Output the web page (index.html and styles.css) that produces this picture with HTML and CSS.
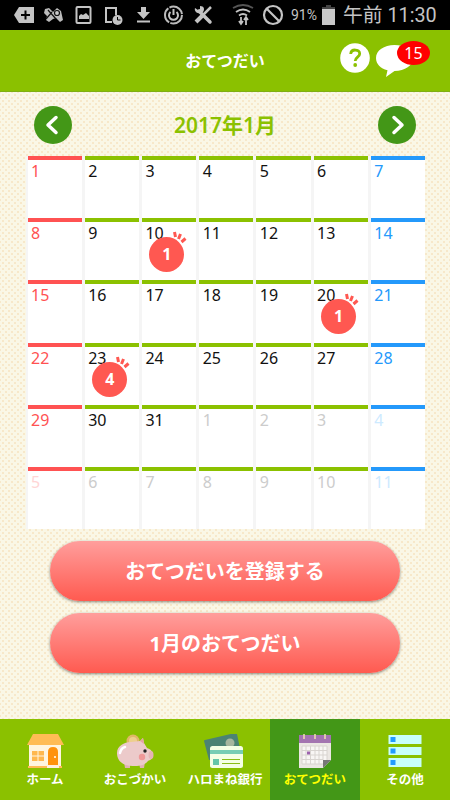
FILE: index.html
```
<!DOCTYPE html>
<html lang="ja">
<head>
    <meta charset="utf-8">
    <title>おてつだい</title>
    <link rel="stylesheet" href="styles.css">
</head>
<body>
    <div class="status">
        <svg class="status-icons" width="225" height="30" viewBox="0 0 225 30">
            <path d="M14 15l5-8h15v16H19z" fill="#c4c4c4"/>
            <path d="M21 15h9M25.500 10.500v9" stroke="#000" stroke-width="2"/>
            <path d="M45 9l4-1 4 4 4-4 4 3 2 9-3 2-4-4-3 1-4 3-3-2 1-4-3-3z" fill="#bbb"/>
            <path d="M48 10l8 9M46 19l6-7" stroke="#111" stroke-width="1.200"/>
            <circle cx="57" cy="13" r="2.500" fill="#ccc" stroke="#111" stroke-width="1.200"/>
            <rect x="76.500" y="7" width="14" height="16" rx="1" fill="none" stroke="#c4c4c4" stroke-width="2"/>
            <path d="M79 19v-3l2-2 2 1 3-2 3 3v3z" fill="#c4c4c4"/>
            <path d="M112 22h-6V8h10v7" fill="none" stroke="#c4c4c4" stroke-width="2"/>
            <circle cx="117.500" cy="20" r="5" fill="#c4c4c4"/>
            <path d="M117.500 17v3h3" stroke="#000" fill="none"/>
            <path d="M141 7h5v5h4l-6.500 7-6.500-7h4zM137 20.500h13v2h-13z" fill="#c4c4c4"/>
            <circle cx="173.500" cy="15" r="8.500" fill="none" stroke="#bbb" stroke-width="2" stroke-dasharray="16.500 1.300"/>
            <path d="M170.500 12a4.500 4.500 0 1 0 6 0M173.500 9v6" fill="none" stroke="#c4c4c4" stroke-width="2"/>
            <path d="M199 11l11 11" stroke="#c4c4c4" stroke-width="3.500" stroke-linecap="round"/>
            <path d="M195 8l3 2 2-1V6c4 0 5 3 3 6l-3 1c-3 1-6-2-5-5z" fill="#c4c4c4"/>
            <path d="M196 22l6-6" stroke="#c4c4c4" stroke-width="4"/>
            <path d="M202 16l9-9" stroke="#c4c4c4" stroke-width="2.500"/>
        </svg>
        <svg class="signal-icons" width="63" height="30" viewBox="0 0 63 30">
            <g fill="none" stroke="#c4c4c4" stroke-width="1.800">
                <path d="M8 8q10-6 20 0" stroke="#555"/>
                <path d="M11 12q7-5 14 0M14 15.500q4-3 8 0"/>
                <path d="M16 17v7M14 21l2 3 2-3M21 25v-7M19 20l2-3 2 3"/>
                <circle cx="48" cy="15" r="9" stroke-width="2.200"/>
                <path d="M42 9l12 12" stroke-width="2.200"/>
            </g>
        </svg>
        <span class="percent">91%</span>
        <svg class="battery" width="13" height="20" viewBox="0 0 13 20">
            <path d="M4 0h5v2h4v3H0V2h4z" fill="#444"/>
            <path d="M0 4h13v16H0z" fill="#c8c8c8"/>
        </svg>
        <span class="clock">午前 11:30</span>
    </div>

    <header class="header">
        <h1>おてつだい</h1>
        <div class="header-actions">
            <svg width="30" height="30" viewBox="0 0 30 30">
                <circle cx="15" cy="15" r="14.800" fill="#fff"/>
                <path d="M10.700 11c.3-5.500 9-5 9-.3 0 3.600-4.500 3.300-4.500 7.300" fill="none" stroke="#8bc100" stroke-width="2.800"/>
                <circle cx="15.200" cy="22" r="1.900" fill="#8bc100"/>
            </svg>
            <div class="messages">
                <svg width="37" height="33" viewBox="0 0 37 33">
                    <path d="M18.500 0C8 0 0 5.500 0 13c0 6 4.500 10.500 11.500 12.300L10 32l8.500-6C29 26 37 20.500 37 13S29 0 18.500 0z" fill="#fff"/>
                </svg>
                <span class="badge">15</span>
            </div>
        </div>
    </header>

    <main class="main">
        <div class="month">
            <button class="arrow"><svg width="38" height="38" viewBox="0 0 38 38"><path d="M22 11.500L14 19l8 7.500"/></svg></button>
            <h2>2017年1月</h2>
            <button class="arrow"><svg width="38" height="38" viewBox="0 0 38 38"><path d="M16 11.500L24 19l-8 7.500"/></svg></button>
        </div>
        <div class="calendar" id="calendar"></div>
        <div class="actions">
            <button class="action">おてつだいを登録する</button>
            <button class="action">1月のおてつだい</button>
        </div>
    </main>

    <nav class="tabs">
        <a class="tab">
            <svg width="38" height="36" viewBox="0 0 38 36">
                <path d="M3 10h32v24H3z" fill="#fff5df"/>
                <path d="M7 0h25l6 11H1z" fill="#ffbc55"/>
                <path d="M6 17h12v10H6z" fill="#ffb84e"/>
                <path d="M12 17v10M6 22h12" stroke="#fff5df"/>
                <path d="M22 32V18q0-5 5-5t5 5v14z" fill="#ff920d"/>
                <circle cx="29" cy="23" r="1" fill="#fff"/>
                <path d="M2 32h19v2H2zM33 32h3v2h-3z" fill="#ffbc55"/>
                <path d="M21 31h12v3H21z" fill="#fff0e0"/>
            </svg>
            <span>ホーム</span>
        </a>
        <a class="tab">
            <svg width="38" height="36" viewBox="0 0 38 36">
                <circle cx="17" cy="7" r="6.500" fill="#e0b768"/>
                <circle cx="17" cy="7" r="4" fill="#edcf8d"/>
                <path d="M8 28h6v6H9zM23 28h6l-1 6h-4z" fill="#e0b3b3"/>
                <path d="M24 7l3-3 1 5 3 5c3 1 6 3 6 7s-3 5-5 6c-4 5-9 5-15 5C7 32 1 27 1 19 1 12 8 8 15 8z" fill="#eccaca"/>
                <path d="M24 7l3-3 1 6z" fill="#e5a3a3"/>
                <ellipse cx="35" cy="21" rx="2.500" ry="4" fill="#e5b4b4"/>
                <path d="M4 19q1-5 5-6" stroke="#fff" stroke-width="2.500" stroke-linecap="round" fill="none"/>
                <circle cx="26" cy="23" r="3.200" fill="#ef9898"/>
                <circle cx="29" cy="17" r="1.700" fill="#222"/>
            </svg>
            <span>おこづかい</span>
        </a>
        <a class="tab">
            <svg width="44" height="36" viewBox="0 0 44 36">
                <path d="M1 7q0-1 1-1L32-1q2-1 2 1l5 24-33 2z" fill="#4b8373"/>
                <circle cx="27" cy="9" r="4.500" fill="#a6b69e"/>
                <rect x="7" y="12" width="33" height="22" rx="2.500" fill="#f5ffe5"/>
                <path d="M7 16h33v4H7z" fill="#77cdb4"/>
                <path d="M10 25h6v6h-6z" fill="#65c6a8"/>
                <path d="M19 25.500h18M19 29.500h18" stroke="#8bbd17"/>
            </svg>
            <span>ハロまね銀行</span>
        </a>
        <a class="tab active">
            <svg width="34" height="36" viewBox="0 0 34 36">
                <path d="M1 2h32v24l-8 8H1z" fill="#ebe7e3"/>
                <path d="M1 1h32v8H1z" fill="#a374b0"/>
                <path d="M4 12h25v18H4z" fill="#f8f6f4"/>
                <path d="M4 12h25M4 16.500h25M4 21h25M4 25.500h21M4 30h21M4 12v18M8 12v18M12.500 12v18M17 12v18M21 12v18M25 12v14M29 12v14" stroke="#d8d4d0"/>
                <path d="M9 17.500h3v3H9z" fill="#9c62ad"/>
                <path d="M25 26h8l-8 8z" fill="#777"/>
                <path d="M6 0v5M17 0v5M27 0v5" stroke="#f1dfb2" stroke-width="1.500"/>
            </svg>
            <span>おてつだい</span>
        </a>
        <a class="tab">
            <svg width="34" height="36" viewBox="0 0 34 36">
                <path d="M.5 1h33v9H.5zM.5 13h33v8H.5zM.5 24h33v9H.5z" fill="#c8fffb"/>
                <path d="M2.500 3h5v5h-5zM2.500 14.500h5v5h-5zM2.500 26h5v5h-5z" fill="#229cff"/>
            </svg>
            <span>その他</span>
        </a>
    </nav>

    <script>
        const calendar = document.getElementById('calendar');
        const helpCounts = { 10: 1, 20: 1, 23: 4 };

        // 31 days in January, then the start of February
        for (let i = 1; i <= 42; i++) {
            const cell = document.createElement('div');
            cell.className = 'day';
            if (i % 7 === 1) cell.classList.add('sunday');
            if (i % 7 === 0) cell.classList.add('saturday');
            if (i > 31) cell.classList.add('next');

            const number = document.createElement('span');
            number.textContent = i > 31 ? i - 31 : i;
            cell.appendChild(number);

            if (helpCounts[i]) {
                const stamp = document.createElement('div');
                stamp.className = 'stamp';
                stamp.innerHTML = '<b>' + helpCounts[i] + '</b>' +
                    '<svg class="rays" width="15" height="13" viewBox="0 0 15 13"><path d="M2.500 1l1 5M8.500 3L6.500 8M13.500 7.500L9.500 11"/></svg>';
                cell.appendChild(stamp);
            }
            calendar.appendChild(cell);
        }
    </script>
</body>
</html>
```
FILE: styles.css
```
* { box-sizing: border-box; }
body { margin: 0; height: 800px; display: flex; flex-direction: column; overflow: hidden; font-family: "Noto Sans", "Noto Sans CJK JP", sans-serif; }
h1, h2 { margin: 0; }
button { border: none; padding: 0; font-family: inherit; }
svg { display: block; flex-shrink: 0; }

.status { height: 30px; background: #000; color: #c4c4c4; display: flex; align-items: center; font-family: Roboto, "Noto Sans CJK JP", sans-serif; white-space: nowrap; }
.percent { width: 31px; padding-left: 3px; font-size: 14px; }
.battery { margin: 0 8px 0 3px; }
.clock { font-size: 19.8px; line-height: 30px; padding-top: 2px; }

.header { height: 62px; background: #8bc100; display: grid; grid-template-columns: 115px 1fr 115px; align-items: center; border-bottom: 1px solid #7faf13; }
.header h1 { grid-column: 2; color: #fff; font-size: 16px; font-weight: 700; text-align: center; padding-bottom: 2px; }
.header-actions { display: flex; gap: 6px; padding-left: 5px; }
.messages { position: relative; padding-top: 1px; }
.messages svg { margin-top: 1px; }
.badge { position: absolute; left: 21px; top: -2px; width: 33px; height: 24px; border-radius: 50%; background: #f00; color: #fff; font-size: 16px; line-height: 24px; text-align: center; }

.main { height: 627px; background-color: #faf7e6; background-image: radial-gradient(circle, #f7e8ca .8px, transparent 1.4px), radial-gradient(circle, #f7e8ca .8px, transparent 1.4px); background-size: 6px 6px; background-position: 0 0, 3px 3px; }
.month { height: 64px; padding: 2px 34px 0; display: flex; align-items: center; justify-content: space-between; }
.month h2 { color: #8bc100; font-size: 21px; font-weight: 600; padding-bottom: 2px; }
.arrow { width: 38px; height: 38px; border-radius: 50%; background: #439717; }
.arrow path { fill: none; stroke: #fff; stroke-width: 3.5; stroke-linecap: round; stroke-linejoin: round; }

.calendar { width: 399px; height: 373px; margin-left: 26px; padding-left: 1.5px; background: #f5f5f5; display: grid; grid-template-columns: repeat(7, 1fr); grid-template-rows: repeat(6, 1fr); column-gap: 3px; }
.day { position: relative; background: #fff; border-top: 4px solid #8bc100; padding: 0 3.5px; font-size: 16px; line-height: 22px; color: #111; }
.sunday { border-color: #ff5252; color: #ff5252; }
.saturday { border-color: #2499fb; color: #2499fb; }
.next { color: #ccc; }
.next.sunday { color: #ffd5d5; }
.next.saturday { color: #cdeaff; }
.stamp { position: absolute; left: 7.5px; top: 15px; width: 35px; height: 35px; border-radius: 50%; background: #ff5851; color: #fff; text-align: center; line-height: 34px; }
.rays { position: absolute; left: 23px; top: -6px; }
.rays path { stroke: #ff5851; stroke-width: 3; }

.actions { padding: 12px 50px 0; display: flex; flex-direction: column; gap: 12px; }
.action { height: 60px; padding-bottom: 2px; border-radius: 30px; background: linear-gradient(#ff9e9c, #ff5a50); box-shadow: 0 1px 3px rgba(0,0,0,.45); color: #fff; font-size: 20px; font-weight: 700; }

.tabs { height: 81px; display: grid; grid-template-columns: repeat(5, 1fr); background: #8bc100; }
.tab { display: flex; flex-direction: column; align-items: center; padding-top: 15px; color: #fff; font-size: 12.5px; font-weight: 700; line-height: 19px; white-space: nowrap; }
.active { background: #439717; color: #ff0; }
```
